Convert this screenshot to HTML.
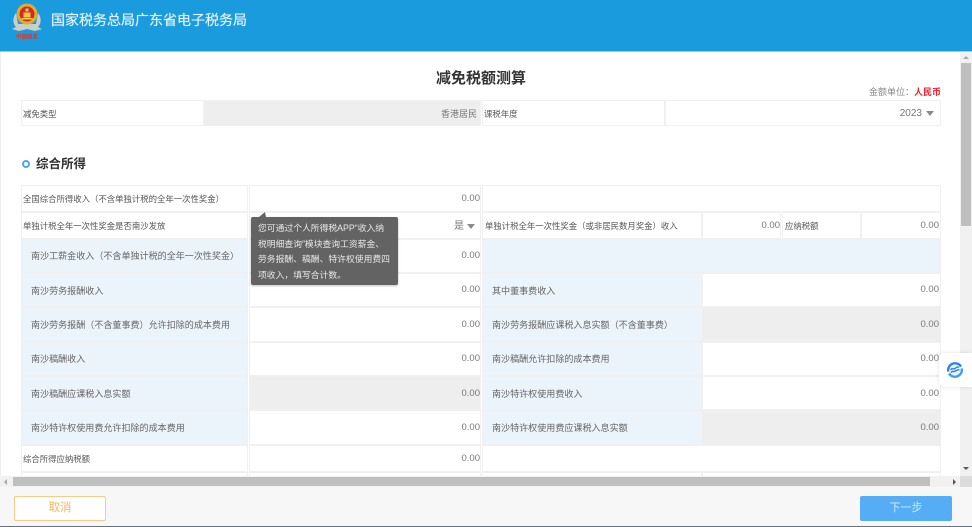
<!DOCTYPE html>
<html lang="zh"><head><meta charset="utf-8"><style>
html,body{margin:0;padding:0}
body{width:972px;height:527px;position:relative;overflow:hidden;background:#fff;font-family:"Liberation Sans","Noto Sans CJK SC",sans-serif;color:#666}
.a{position:absolute;box-sizing:border-box}
.c{position:absolute;box-sizing:border-box;background:#fff;font-size:8.4px;line-height:1;white-space:nowrap;display:flex;align-items:center;color:#555;padding:2px 0 0 1px;outline:1px solid #f0f0f0}
.b{background:#ebf3fb;padding-left:9px;color:#666;font-size:9.05px}
.g{background:#eeeeee}
.n{justify-content:flex-end;font-size:9.5px;color:#777;padding:0}
.clip{position:absolute;left:0;top:52px;width:960px;height:424px;overflow:hidden}
.tri{position:absolute;width:0;height:0;border-left:4px solid transparent;border-right:4px solid transparent;border-top:5px solid #8a8a8a}
</style></head><body>
<div class="a" style="left:0;top:0;width:972px;height:51px;background:#1a9bde"></div>
<div class="a" style="left:0;top:51px;width:972px;height:1px;background:#8fd0f2"></div>
<svg class="a" style="left:11px;top:2px" width="32" height="40" viewBox="0 0 32 40">
<path d="M5 11 C1 16 2 22 5 25 L1 27 L8 29 L16 27 L24 29 L31 27 L27 25 C30 22 31 16 27 11 L25 22 L7 22Z" fill="#c9cfc4"/>
<circle cx="16" cy="12" r="10.500" fill="#dcae36"/><circle cx="16" cy="12" r="7.500" fill="#d42a22"/>
<path d="M10.500 16h11v1.500h-11zM12.500 10.500h7v5h-7zM14.500 6.500h3v3h-3z" fill="#f0c94a"/>
<text x="5" y="36.500" font-size="5.500" fill="#d8372e" font-family="'Noto Sans CJK SC',sans-serif" font-weight="bold">中国税务</text>
</svg>
<div class="a" style="left:51px;top:12px;font-size:14px;line-height:16px;color:#e2f2fb;white-space:nowrap;text-shadow:0 0 .6px #e2f2fb">国家税务总局广东省电子税务局</div>
<div class="a" style="left:0;top:52px;width:1px;height:435px;background:#eee"></div>

<div class="clip">
<div class="a" style="left:0;top:18px;width:962px;text-align:center;font-size:15px;line-height:18px;font-weight:bold;color:#333">减免税额测算</div>
<div class="a" style="right:19px;top:34px;font-size:9px;line-height:12px;color:#888;white-space:nowrap">金额单位：<span style="color:#f21f2f;font-weight:bold">人民币</span></div>

<div class="c" style="left:22px;top:49px;width:181px;height:24px">减免类型</div>
<div class="c g n" style="left:205px;top:49px;width:275px;height:24px;font-size:9px;padding:2px 3px 0 0">香港居民</div>
<div class="c" style="left:483px;top:49px;width:181px;height:24px">课税年度</div>
<div class="c n" style="left:666px;top:49px;width:274px;height:24px;padding:2px 18px 0 0;font-size:10px">2023<span class="tri" style="left:260px;top:10px"></span></div>

<div class="a" style="left:22px;top:108px;width:8px;height:8px;border:2px solid #4aa6ee;border-radius:50%"></div>
<div class="a" style="left:36px;top:104px;font-size:12.500px;line-height:17px;font-weight:bold;color:#333">综合所得</div>

<div class="c" style="left:22px;top:134px;width:225px;height:25px">全国综合所得收入（不含单独计税的全年一次性奖金）</div>
<div class="c n" style="left:250px;top:134px;width:230px;height:25px">0.00</div>
<div class="c" style="left:483px;top:134px;width:457px;height:25px"></div>

<div class="c" style="left:22px;top:161px;width:225px;height:25px">单独计税全年一次性奖金是否南沙发放</div>
<div class="c n" style="left:250px;top:161px;width:230px;height:25px;padding:2px 16px 0 0;font-size:10px">是<span class="tri" style="left:217px;top:11px"></span></div>
<div class="c" style="left:483px;top:161px;width:218px;height:25px;padding-left:2px">单独计税全年一次性奖金（或非居民数月奖金）收入</div>
<div class="c n" style="left:703px;top:161px;width:77px;height:25px">0.00</div>
<div class="c" style="left:783px;top:161px;width:77px;height:25px;padding-left:2px">应纳税额</div>
<div class="c n" style="left:862px;top:161px;width:78px;height:25px;padding-right:1px">0.00</div>

<div class="c b" style="left:22px;top:188px;width:225px;height:32px">南沙工薪金收入（不含单独计税的全年一次性奖金）</div>
<div class="c n" style="left:250px;top:188px;width:230px;height:32px">0.00</div>
<div class="c b" style="left:483px;top:188px;width:457px;height:32px"></div>

<div class="c b" style="left:22px;top:222px;width:225px;height:32px;padding-top:3px">南沙劳务报酬收入</div>
<div class="c n" style="left:250px;top:222px;width:230px;height:32px">0.00</div>
<div class="c b" style="left:483px;top:222px;width:219px;height:32px;padding-top:3px">其中董事费收入</div>
<div class="c n" style="left:703px;top:222px;width:237px;height:32px;padding-right:1px">0.00</div>

<div class="c b" style="left:22px;top:256px;width:225px;height:33px">南沙劳务报酬（不含董事费）允许扣除的成本费用</div>
<div class="c n" style="left:250px;top:256px;width:230px;height:33px">0.00</div>
<div class="c b" style="left:483px;top:256px;width:219px;height:33px">南沙劳务报酬应课税入息实额（不含董事费）</div>
<div class="c n g" style="left:703px;top:256px;width:237px;height:33px;padding-right:1px">0.00</div>

<div class="c b" style="left:22px;top:291px;width:225px;height:32px">南沙稿酬收入</div>
<div class="c n" style="left:250px;top:291px;width:230px;height:32px">0.00</div>
<div class="c b" style="left:483px;top:291px;width:219px;height:32px">南沙稿酬允许扣除的成本费用</div>
<div class="c n" style="left:703px;top:291px;width:237px;height:32px;padding-right:1px">0.00</div>

<div class="c b" style="left:22px;top:325px;width:225px;height:32px;padding-top:3px">南沙稿酬应课税入息实额</div>
<div class="c n g" style="left:250px;top:325px;width:230px;height:32px;padding-top:1px">0.00</div>
<div class="c b" style="left:483px;top:325px;width:219px;height:32px;padding-top:3px">南沙特许权使用费收入</div>
<div class="c n" style="left:703px;top:325px;width:237px;height:32px;padding:1px 1px 0 0">0.00</div>

<div class="c b" style="left:22px;top:359px;width:225px;height:33px">南沙特许权使用费允许扣除的成本费用</div>
<div class="c n" style="left:250px;top:359px;width:230px;height:33px">0.00</div>
<div class="c b" style="left:483px;top:359px;width:219px;height:33px">南沙特许权使用费应课税入息实额</div>
<div class="c n g" style="left:703px;top:359px;width:237px;height:33px;padding-right:1px">0.00</div>

<div class="c" style="left:22px;top:394px;width:225px;height:25px">综合所得应纳税额</div>
<div class="c n" style="left:250px;top:394px;width:230px;height:25px">0.00</div>
<div class="c" style="left:483px;top:394px;width:457px;height:25px"></div>
<div class="c" style="left:22px;top:421px;width:225px;height:25px"></div>
<div class="c" style="left:250px;top:421px;width:230px;height:25px"></div>
<div class="c" style="left:483px;top:421px;width:218px;height:25px"></div>
<div class="c" style="left:703px;top:421px;width:237px;height:25px"></div>
</div>

<!-- tooltip -->
<div class="a" style="left:251px;top:217px;width:147px;height:68px;background:#636363;border-radius:2px;box-shadow:0 1px 2px rgba(0,0,0,.25);padding:4px 0 0 7px;color:#e8e8e8;font-size:8.800px;line-height:15.500px;white-space:nowrap">您可通过个人所得税APP“收入纳<br>税明细查询”模块查询工资薪金、<br>劳务报酬、稿酬、特许权使用费四<br>项收入，填写合计数。</div>
<div class="a" style="left:259px;top:212px;width:0;height:0;border-left:6px solid transparent;border-right:1px solid transparent;border-bottom:5px solid #636363"></div>

<!-- scrollbars -->
<div class="a" style="left:960px;top:52px;width:12px;height:435px;background:#f1f1f1"></div>
<div class="a" style="left:961px;top:63px;width:10px;height:163px;background:#bfbfbf"></div>
<div class="a" style="left:963px;top:56px;border:3px solid transparent;border-bottom:3px solid #aaa;border-top:0"></div>
<div class="a" style="left:963px;top:467px;border:3px solid transparent;border-top:3px solid #555;border-bottom:0"></div>
<div class="a" style="left:0;top:476px;width:960px;height:11px;background:#f1f1f1"></div>
<div class="a" style="left:13px;top:477px;width:917px;height:9px;background:#bfbfbf"></div>
<div class="a" style="left:4px;top:479px;border:3px solid transparent;border-right:3px solid #aaa;border-left:0"></div>
<div class="a" style="left:953px;top:479px;border:3px solid transparent;border-left:3px solid #555;border-right:0"></div>
<div class="a" style="left:960px;top:476px;width:12px;height:11px;background:#dcdcdc"></div>

<!-- widget -->
<div class="a" style="left:939px;top:353px;width:33px;height:34px;background:#fff;border-radius:5px 0 0 5px;box-shadow:0 0 4px rgba(0,0,0,.12)"></div>
<svg class="a" style="left:946px;top:361px" width="18" height="18" viewBox="0 0 18 18" fill="none">
<circle cx="9" cy="9" r="7" fill="#e6f1fc"/>
<path d="M2.200 10.500 A7 7 0 0 1 15 5.500" stroke="#2f7fe6" stroke-width="2.300"/>
<path d="M15.800 7.500 A7 7 0 0 1 3 12.500" stroke="#3a9eee" stroke-width="2.300"/>
<path d="M4.500 9 C6 6 7.500 9 9 7.500 S11.500 5.500 13 6.500 M5 11.500 C6.500 9 8 11.500 9.500 10 S12 8.500 13.500 9" stroke="#2f7fe6" stroke-width="1.400"/>
</svg>

<!-- footer -->
<div class="a" style="left:0;top:487px;width:972px;height:39px;background:#f7f7f7"></div>
<div class="a" style="left:0;top:526px;width:972px;height:1px;background:#67737c"></div>
<div class="a" style="left:14px;top:496px;width:92px;height:25px;background:#fff;border:1px solid #fcc98c;border-radius:2px;color:#fbb35f;font-size:11.500px;line-height:23px;text-align:center">取消</div>
<div class="a" style="left:860px;top:496px;width:92px;height:25px;background:#55aef5;border-radius:2px;color:#cfe8fb;font-size:11px;line-height:25px;text-align:center">下一步</div>
</body></html>
